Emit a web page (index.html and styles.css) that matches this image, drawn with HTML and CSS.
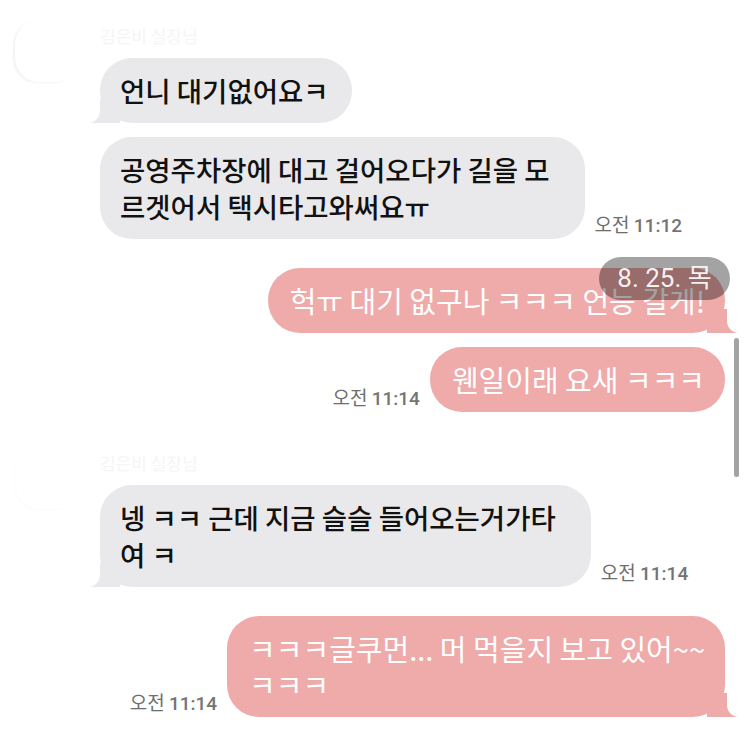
FILE: index.html
```html
<!DOCTYPE html>
<html>
  <head>
    <title>채팅</title>
    <meta charset="utf-8" />
    <meta name="viewport" content="width=device-width, initial-scale=1" />
    <link rel="stylesheet" href="styles.css">
  </head>
  <body>
    <div class="chat">
      <section class="group in">
        <div class="avatar"></div>
        <div class="msgs">
          <div class="name">김은비 실장님</div>
          <div class="line">
            <p class="bubble gray tail">언니 대기없어요ㅋ</p>
          </div>
          <div class="line">
            <p class="bubble gray multi">공영주차장에 대고 걸어오다가 길을 모<br />르겟어서 택시타고와써요ㅠ</p>
            <span class="time">오전 <b>11:12</b></span>
          </div>
        </div>
      </section>

      <section class="group out">
        <div class="line">
          <p class="bubble pink tail">헉ㅠ 대기 없구나 ㅋㅋㅋ 언능 갈게!</p>
        </div>
        <div class="line">
          <span class="time">오전 <b>11:14</b></span>
          <p class="bubble pink">웬일이래 요새 ㅋㅋㅋ</p>
        </div>
      </section>

      <section class="group in">
        <div class="avatar faint"></div>
        <div class="msgs">
          <div class="name">김은비 실장님</div>
          <div class="line">
            <p class="bubble gray tail multi">넹 ㅋㅋ 근데 지금 슬슬 들어오는거가타<br />여 ㅋ</p>
            <span class="time">오전 <b>11:14</b></span>
          </div>
        </div>
      </section>

      <section class="group out">
        <div class="line">
          <span class="time">오전 <b>11:14</b></span>
          <p class="bubble pink tail">ㅋㅋㅋ글쿠먼... 머 먹을지 보고 있어~~<br />ㅋㅋㅋ</p>
        </div>
      </section>

      <!-- floating date + scroll thumb sit over the list -->
      <div class="date-pill">8. 25. 목</div>
      <div class="scrollbar"></div>
    </div>
  </body>
</html>
```

FILE: styles.css
```css
* {
  box-sizing: border-box;
}
html,
body {
  margin: 0;
  background: #ffffff;
  font-family: "Noto Sans CJK KR", "Noto Sans", sans-serif;
  color: #111111;
}

.chat {
  position: relative;
  width: 744px;
  height: 729px;
  overflow: hidden;
  padding: 24px 19px 0 15px;
}

.group {
  margin-top: 29px;
}
.group.in {
  display: flex;
  gap: 20px;
  margin-top: 39px;
}
.group:first-child {
  margin-top: 0;
}

.avatar {
  flex: none;
  width: 65px;
  height: 62px;
  margin-top: -4px;
  border-radius: 24px;
  background: #ffffff;
  box-shadow: -2px 1px 2px rgba(0, 0, 0, 0.05);
}
.avatar.faint {
  box-shadow: -1px 1px 2px rgba(0, 0, 0, 0.02);
}

.msgs {
  flex: 1;
}

.name {
  height: 24px;
  margin-bottom: 10px;
  font-size: 17px;
  line-height: 24px;
  color: #f5f5f5;
}

.line {
  display: flex;
  align-items: flex-end;
  gap: 10px;
}
.line + .line {
  margin-top: 14px;
}
.out .line {
  justify-content: flex-end;
}

.bubble {
  position: relative;
  margin: 0;
  border-radius: 32px;
}
.gray {
  padding: 14px 23px 14px 20px;
  background: #e9e9eb;
  color: #111111;
  font-size: 27.5px;
  font-weight: 500;
  line-height: 37px;
}
.gray.multi {
  padding-right: 35px;
}
.pink {
  padding: 14px 20px 15px 22px;
  background: #efaaaa;
  color: #ffffff;
  font-size: 29px;
  line-height: 36px;
}

/* bubble tails */
.tail::before,
.tail::after {
  content: "";
  position: absolute;
  bottom: 0;
  height: 24px;
}
.gray.tail::before {
  left: -10px;
  width: 30px;
  background: #e9e9eb;
}
.gray.tail::after {
  left: -30px;
  width: 30px;
  background: #ffffff;
  border-bottom-right-radius: 12px;
}
.pink.tail::before {
  right: -12px;
  width: 30px;
  background: #efaaaa;
}
.pink.tail::after {
  right: -32px;
  width: 30px;
  background: #ffffff;
  border-bottom-left-radius: 12px;
}

.time {
  flex: none;
  margin-bottom: 2px;
  font-size: 19px;
  line-height: 22px;
  color: #6e6e6e;
  white-space: nowrap;
}
.time b {
  font-family: "Roboto", "Noto Sans", sans-serif;
  font-weight: 500;
  color: #747474;
}

.date-pill {
  position: absolute;
  top: 257px;
  left: 599px;
  width: 131px;
  height: 43px;
  border-radius: 22px;
  background: rgba(0, 0, 0, 0.36);
  color: rgba(255, 255, 255, 0.92);
  font-family: "Roboto", "Noto Sans CJK KR", sans-serif;
  font-size: 26px;
  line-height: 43px;
  text-align: center;
}

.scrollbar {
  position: absolute;
  top: 338px;
  left: 734px;
  width: 5px;
  height: 139px;
  border-radius: 3px;
  background: #a3a3a3;
}
```
